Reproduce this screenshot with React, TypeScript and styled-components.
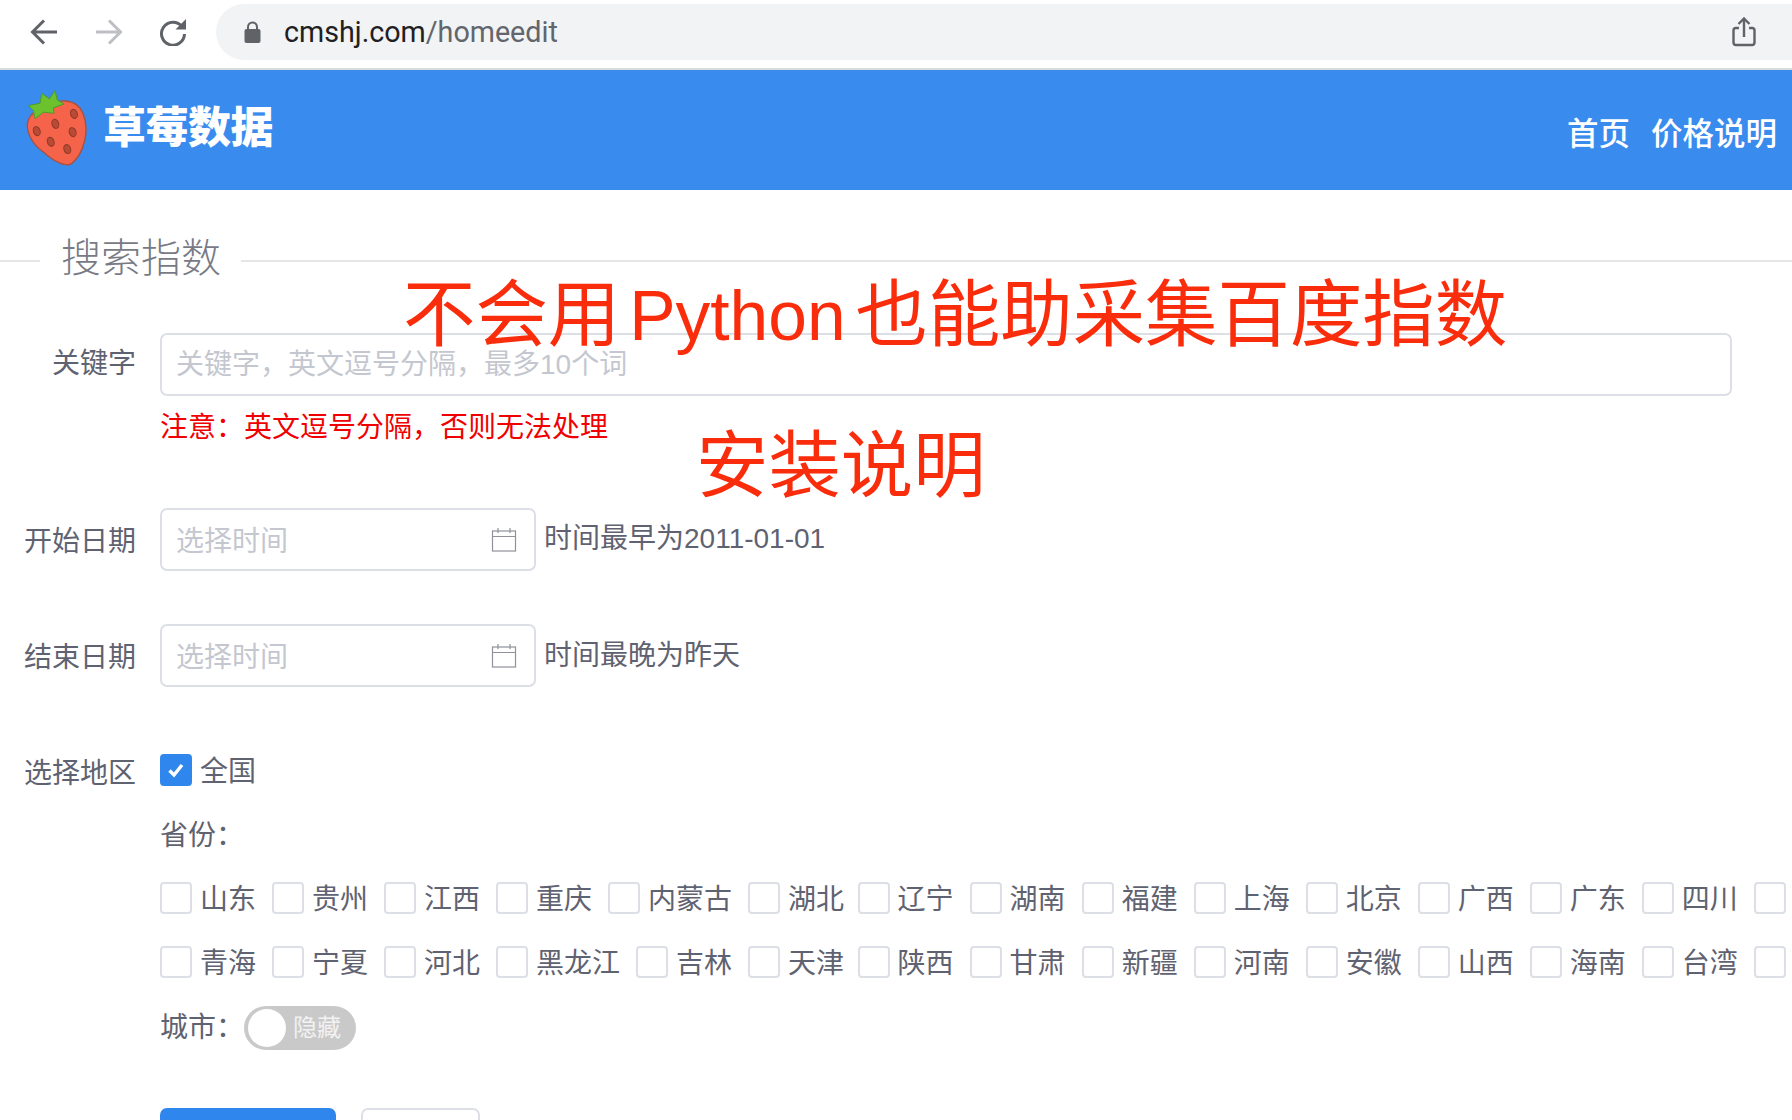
import React from 'react';
import styled, { createGlobalStyle } from 'styled-components';

const GlobalStyle = createGlobalStyle`
  html, body {
    margin: 0;
    padding: 0;
    background: #fff;
  }
  * {
    box-sizing: border-box;
  }
`;

const Page = styled.div`
  position: relative;
  width: 1792px;
  height: 1120px;
  overflow: hidden;
  background: #fff;
  color: #5f6270;
  font-family: 'Liberation Sans', 'Noto Sans CJK SC', sans-serif;
  font-size: 28px;
`;

const BrowserBar = styled.div`
  height: 70px;
  padding: 4px 0 8px 30px;
  border-bottom: 2px solid #d6dcd9;
  display: flex;
  align-items: center;
`;

const NavIcon = styled.svg<{ $gap: number }>`
  flex: none;
  width: 28px;
  height: 28px;
  margin-right: ${(p) => p.$gap}px;
`;

const UrlPill = styled.div`
  flex: 1;
  height: 56px;
  padding: 0 36px 0 28px;
  display: flex;
  align-items: center;
  background: #f1f3f4;
  border-radius: 28px 0 0 28px;
`;

const UrlText = styled.div`
  flex: 1;
  margin-left: 23px;
  font-family: Roboto, sans-serif;
  font-size: 28.7px;
  color: #1f2023;
`;

const UrlPath = styled.span`
  color: #62656b;
`;

const Header = styled.header`
  height: 120px;
  padding: 0 15px 0 25px;
  display: flex;
  align-items: center;
  justify-content: space-between;
  background: #3a8bee;
  color: #fff;
`;

const Logo = styled.div`
  display: flex;
  align-items: center;
  gap: 13px;
  margin-top: -5px;
`;

const LogoText = styled.div`
  margin-top: 2px;
  font-size: 43px;
  font-weight: 900;
  letter-spacing: -0.5px;
  line-height: 1;
`;

const Nav = styled.nav`
  display: flex;
  gap: 21px;
  margin-top: 1px;
  font-size: 31.5px;
  font-weight: 500;
`;

const Legend = styled.div`
  height: 72px;
  margin-top: 31px;
  display: flex;
  align-items: center;
`;

const LegendLine = styled.div<{ $grow?: boolean }>`
  height: 2px;
  margin-top: 7px;
  background: #e4e6e8;
  width: 40px;
  flex: ${(p) => (p.$grow ? 1 : 'none')};
`;

const LegendText = styled.div`
  margin-top: -5px;
  padding: 0 20px 0 21px;
  font-size: 40px;
  font-weight: 300;
  color: #787b85;
`;

const Form = styled.form`
  display: flex;
  flex-direction: column;
`;

const Row = styled.div<{ $top: number }>`
  margin-top: ${(p) => p.$top}px;
  display: grid;
  grid-template-columns: 136px 1fr;
  column-gap: 24px;
`;

const Label = styled.label<{ $height: number }>`
  height: 60px;
  text-align: right;
  line-height: ${(p) => p.$height}px;
`;

const TextInput = styled.div<{ $width?: number; $lift: number }>`
  width: ${(p) => (p.$width ? `${p.$width}px` : '1572px')};
  height: 63px;
  padding: 0 17px ${(p) => p.$lift}px 14px;
  display: flex;
  align-items: center;
  justify-content: space-between;
  border: 2px solid #dcdfe6;
  border-radius: 7px;
  color: #c4c7cf;
`;

const Note = styled.div`
  height: 63px;
  line-height: 63px;
  color: #f00000;
`;

const DateLine = styled.div`
  display: flex;
  align-items: center;
  gap: 8px;
`;

const Hint = styled.span<{ $lift: number }>`
  margin-top: -${(p) => p.$lift}px;
`;

const CalendarIcon = styled.svg`
  width: 26px;
  height: 26px;
  flex: none;
  margin-top: 2px;
`;

const Lines = styled.div`
  display: flex;
  flex-direction: column;
`;

const Line = styled.div`
  height: 64px;
  display: flex;
  align-items: center;
  white-space: nowrap;
`;

const LineText = styled.span`
  margin-top: -2px;
`;

const Check = styled.span`
  display: flex;
  align-items: center;
  margin-right: 16px;

  &:nth-child(6) {
    margin-right: 13.5px;
  }
`;

const Box = styled.span<{ $on?: boolean }>`
  width: 32px;
  height: 32px;
  margin-right: 8px;
  flex: none;
  display: flex;
  align-items: center;
  justify-content: center;
  border-radius: 4px;
  border: 2px solid ${(p) => (p.$on ? '#2f86ec' : '#dcdfe6')};
  background: ${(p) => (p.$on ? '#2f86ec' : '#fff')};
`;

const Switch = styled.span`
  position: relative;
  width: 112px;
  height: 44px;
  margin-top: 4px;
  padding-left: 49px;
  border-radius: 22px;
  background: #c9c9c9;
  color: #f2f2f2;
  font-size: 24px;
  line-height: 44px;
`;

const Knob = styled.span`
  position: absolute;
  left: 4px;
  top: 3px;
  width: 38px;
  height: 38px;
  border-radius: 50%;
  background: #fff;
`;

const Buttons = styled.div`
  margin: 50px 0 0 160px;
  display: flex;
  gap: 25px;
`;

const Button = styled.button<{ $primary?: boolean }>`
  width: ${(p) => (p.$primary ? '176px' : '119px')};
  height: 63px;
  border-radius: 7px;
  border: 2px solid ${(p) => (p.$primary ? '#2f86ec' : '#dcdfe6')};
  background: ${(p) => (p.$primary ? '#2f86ec' : '#fff')};
`;

const Overlay = styled.div<{ $left: number; $top: number }>`
  position: absolute;
  left: ${(p) => p.$left}px;
  top: ${(p) => p.$top}px;
  color: #f92d0c;
  font-size: 72.4px;
  line-height: 80px;
  white-space: nowrap;
`;

const OverlayLatin = styled.span`
  margin: 0 10px 0 9px;
  font-size: 69.5px;
`;

const rowOne = ['山东', '贵州', '江西', '重庆', '内蒙古', '湖北', '辽宁', '湖南', '福建', '上海', '北京', '广西', '广东', '四川', ''];
const rowTwo = ['青海', '宁夏', '河北', '黑龙江', '吉林', '天津', '陕西', '甘肃', '新疆', '河南', '安徽', '山西', '海南', '台湾', ''];

const Strawberry = () => (
  <svg width="65" height="78" viewBox="75 55 195 235">
    <path
      d="M130 110C170 85 230 78 250 130C270 180 252 250 215 280C195 292 160 272 130 245C95 220 74 180 84 150C90 130 105 120 130 110Z"
      fill="#f5634a"
      stroke="#a5523f"
      strokeWidth="4"
    />
    <path
      d="M85 105L120 98L125 68L148 85L165 60L172 88L192 100L160 112L162 128L130 125L105 145L100 120Z"
      fill="#6cc22e"
      stroke="#4f9a2a"
      strokeWidth="3"
      strokeLinejoin="round"
    />
    {[
      [110, 182],
      [166, 160],
      [222, 130],
      [218, 185],
      [152, 214],
      [202, 236],
    ].map(([cx, cy]) => (
      <ellipse key={cx} cx={cx} cy={cy} rx="10" ry="14" fill="#bb4a35" stroke="#8a3a2a" strokeWidth="3" transform={`rotate(-20 ${cx} ${cy})`} />
    ))}
  </svg>
);

const Calendar = () => (
  <CalendarIcon viewBox="0 0 26 26" fill="none" stroke="#8f929a" strokeWidth="1.2">
    <rect x="1.5" y="4" width="23" height="20" />
    <path d="M1.5 9.5H24.5M7 1V6M19 1V6" />
  </CalendarIcon>
);

const CheckItem = ({ text, on }: { text: string; on?: boolean }) => (
  <Check>
    <Box $on={on}>
      {on && (
        <svg width="18" height="16" viewBox="0 0 18 16" fill="none" stroke="#fff" strokeWidth="3.4">
          <path d="M2.5 8.5L7 13L15 3" />
        </svg>
      )}
    </Box>
    <LineText>{text}</LineText>
  </Check>
);

const App: React.FC = () => {
  return (
    <Page>
      <GlobalStyle />

      {/* 浏览器地址栏 */}
      <BrowserBar>
        <NavIcon $gap={37} viewBox="0 0 28 28" fill="none" stroke="#5f6368" strokeWidth="3">
          <path d="M27 14H3M14 2.5L2.5 14L14 25.5" />
        </NavIcon>
        <NavIcon $gap={36} viewBox="0 0 28 28" fill="none" stroke="#bdbfc2" strokeWidth="3">
          <path d="M1 14H25M14 2.5L25.5 14L14 25.5" />
        </NavIcon>
        <NavIcon $gap={29} viewBox="0 0 28 28" fill="none">
          <path d="M23 8.5A11.5 11.5 0 1 0 25.5 16" stroke="#5f6368" strokeWidth="3" />
          <path d="M27 1V11.5H16.5Z" fill="#5f6368" />
        </NavIcon>
        <UrlPill>
          <svg width="17" height="22" viewBox="0 0 17 22">
            <path d="M4 9V6a4.5 4.5 0 0 1 9 0v3" fill="none" stroke="#5f6368" strokeWidth="2" />
            <rect x="0.5" y="8" width="16" height="14" rx="2" fill="#5f6368" />
          </svg>
          <UrlText>
            cmshj.com<UrlPath>/homeedit</UrlPath>
          </UrlText>
          <svg width="24" height="30" viewBox="0 0 24 30" fill="none" stroke="#5f6368" strokeWidth="2.4">
            <path d="M7 11H4a2.5 2.5 0 0 0-2.5 2.5v12A2.5 2.5 0 0 0 4 28h16a2.5 2.5 0 0 0 2.5-2.5v-12A2.5 2.5 0 0 0 20 11h-3" />
            <path d="M12 20V2M6.5 7L12 1.5L17.5 7" />
          </svg>
        </UrlPill>
      </BrowserBar>

      <Header>
        <Logo>
          <Strawberry />
          <LogoText>草莓数据</LogoText>
        </Logo>
        <Nav>
          <span>首页</span>
          <span>价格说明</span>
        </Nav>
      </Header>

      <Legend>
        <LegendLine />
        <LegendText>搜索指数</LegendText>
        <LegendLine $grow />
      </Legend>

      <Form>
        <Row $top={40}>
          <Label $height={61}>关键字</Label>
          <div>
            <TextInput $lift={6}>关键字，英文逗号分隔，最多10个词</TextInput>
            <Note>注意：英文逗号分隔，否则无法处理</Note>
          </div>
        </Row>

        <Row $top={49}>
          <Label $height={67}>开始日期</Label>
          <DateLine>
            <TextInput $width={376} $lift={2}>
              选择时间
              <Calendar />
            </TextInput>
            <Hint $lift={7}>时间最早为2011-01-01</Hint>
          </DateLine>
        </Row>

        <Row $top={53}>
          <Label $height={67}>结束日期</Label>
          <DateLine>
            <TextInput $width={376} $lift={2}>
              选择时间
              <Calendar />
            </TextInput>
            <Hint $lift={5}>时间最晚为昨天</Hint>
          </DateLine>
        </Row>

        <Row $top={51}>
          <Label $height={72}>选择地区</Label>
          <Lines>
            <Line>
              <CheckItem text="全国" on />
            </Line>
            <Line>
              <LineText>省份：</LineText>
            </Line>
            <Line>
              {rowOne.map((name, i) => (
                <CheckItem key={i} text={name} />
              ))}
            </Line>
            <Line>
              {rowTwo.map((name, i) => (
                <CheckItem key={i} text={name} />
              ))}
            </Line>
            <Line>
              <LineText>城市：</LineText>
              <Switch>
                <Knob />
                隐藏
              </Switch>
            </Line>
          </Lines>
        </Row>

        <Buttons>
          <Button $primary type="button" />
          <Button type="button" />
        </Buttons>
      </Form>

      {/* 盖在页面上的红字标题 */}
      <Overlay $left={403} $top={275}>
        不会用<OverlayLatin>Python</OverlayLatin>也能助采集百度指数
      </Overlay>
      <Overlay $left={696} $top={426}>安装说明</Overlay>
    </Page>
  );
};

export default App;
